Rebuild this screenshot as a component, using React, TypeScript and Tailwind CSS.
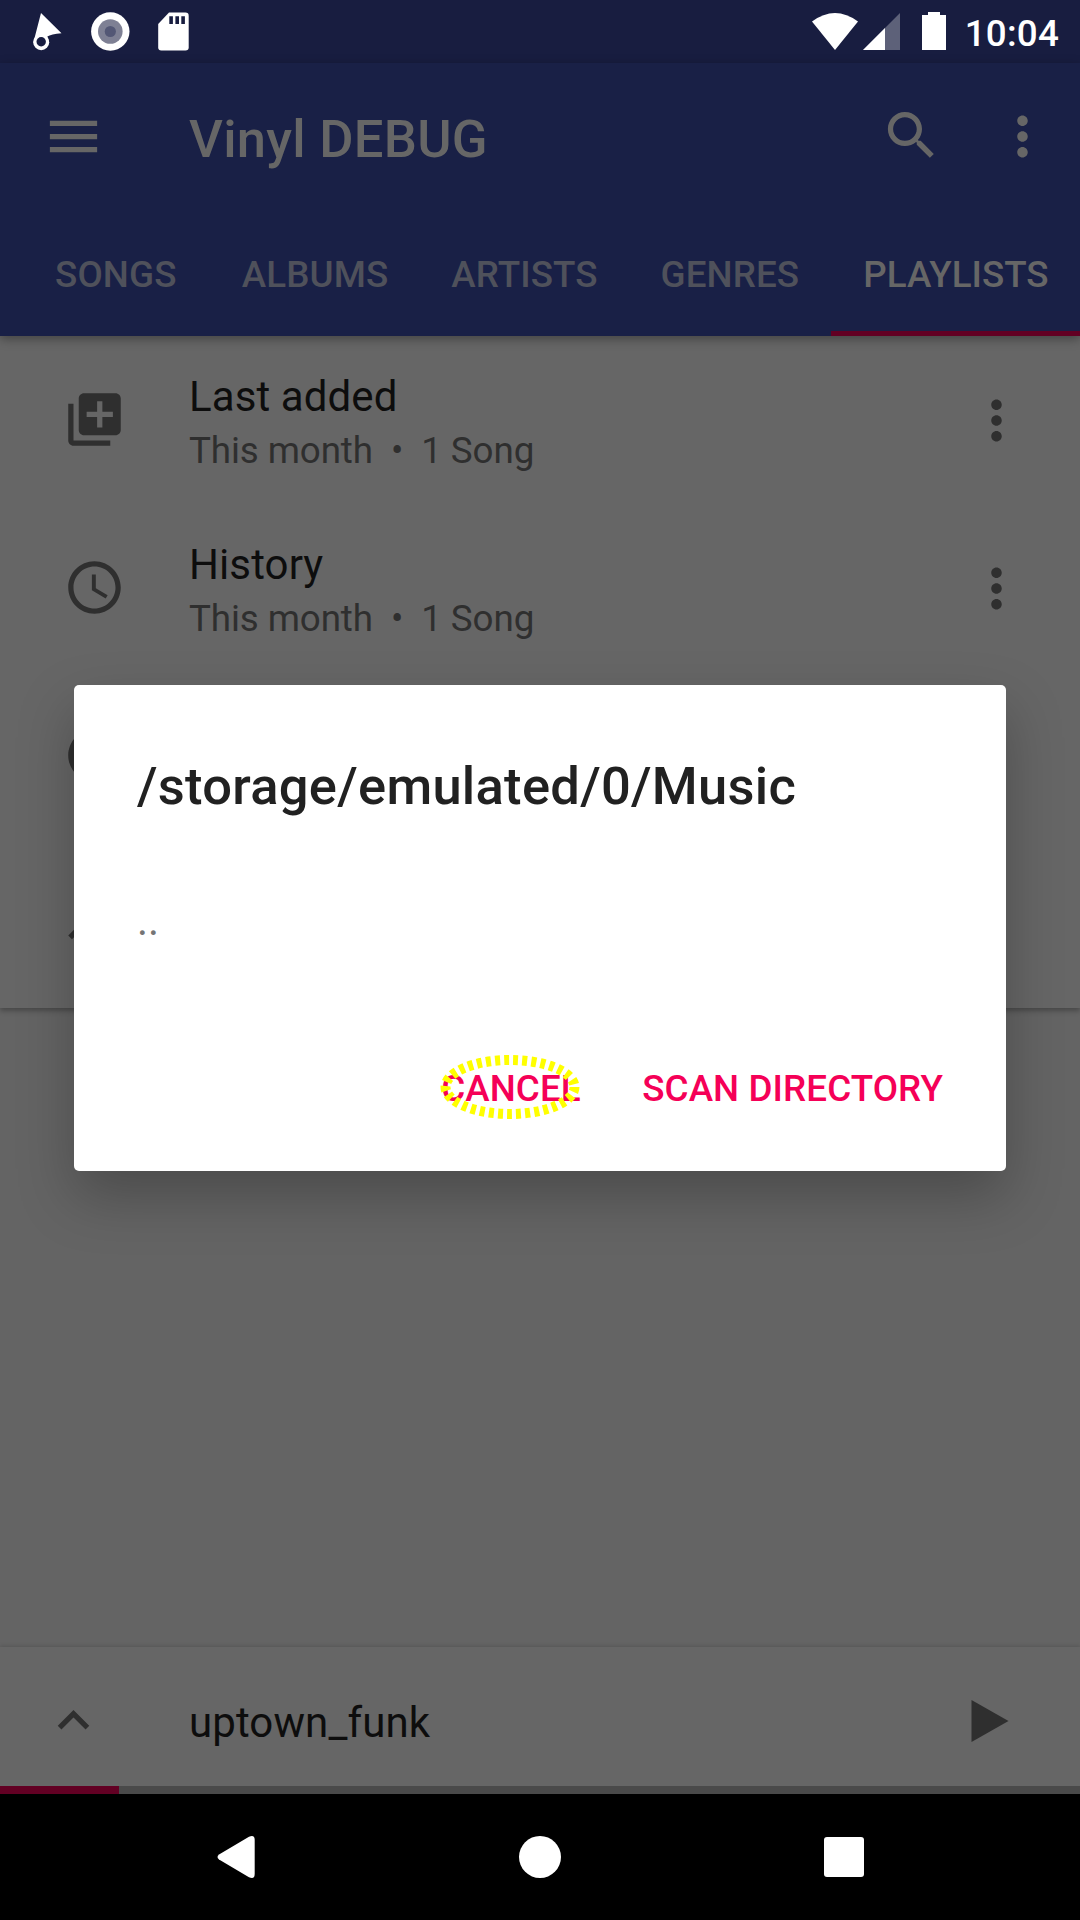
import React from "react";

type IconProps = { d: string; className?: string };

const Icon = ({ d, className = "" }: IconProps) => (
  <svg viewBox="0 0 24 24" className={`h-[63px] w-[63px] shrink-0 ${className}`} fill="currentColor">
    <path d={d} />
  </svg>
);

const icons = {
  menu: "M3 18h18v-2H3v2zm0-5h18v-2H3v2zm0-7v2h18V6H3z",
  search:
    "M15.5 14h-.79l-.28-.27C15.41 12.59 16 11.11 16 9.5 16 5.91 13.09 3 9.5 3S3 5.91 3 9.5 5.91 16 9.5 16c1.61 0 3.09-.59 4.23-1.57l.27.28v.79l5 4.99L20.49 19l-4.99-5zm-6 0C7.01 14 5 11.99 5 9.5S7.01 5 9.5 5 14 7.01 14 9.5 11.99 14 9.5 14z",
  more: "M12 8c1.1 0 2-.9 2-2s-.9-2-2-2-2 .9-2 2 .9 2 2 2zm0 2c-1.1 0-2 .9-2 2s.9 2 2 2 2-.9 2-2-.9-2-2-2zm0 6c-1.1 0-2 .9-2 2s.9 2 2 2 2-.9 2-2-.9-2-2-2z",
  libraryAdd:
    "M4 6H2v14c0 1.1.9 2 2 2h14v-2H4V6zm16-4H8c-1.1 0-2 .9-2 2v12c0 1.1.9 2 2 2h12c1.1 0 2-.9 2-2V4c0-1.1-.9-2-2-2zm-1 9h-4v4h-2v-4H9V9h4V5h2v4h4v2z",
  clock:
    "M11.99 2C6.47 2 2 6.48 2 12s4.47 10 9.99 10C17.52 22 22 17.52 22 12S17.52 2 11.99 2zM12 20c-4.42 0-8-3.58-8-8s3.58-8 8-8 8 3.58 8 8-3.58 8-8 8zm.5-13H11v6l5.25 3.15.75-1.23-4.5-2.67z",
  watchLater: "M12 2C6.5 2 2 6.5 2 12s4.5 10 10 10 10-4.500 10-10S17.5 2 12 2zm4.200 14.200L11 13V7h1.500v5.200l4.500 2.700-.8 1.300z",
  trending: "M16 6l2.290 2.290-4.880 4.880-4-4L2 16.590 3.410 18l6-6 4 4 6.300-6.290L22 12V6z",
  expandLess: "M12 8l-6 6 1.410 1.410L12 10.830l4.590 4.580L18 14z",
};

const playlists = [
  { title: "Last added", icon: icons.libraryAdd, info: "This month  •  1 Song" },
  { title: "History", icon: icons.clock, info: "This month  •  1 Song" },
];

const StatusBar = () => (
  <div className="flex h-[63px] shrink-0 items-center justify-between bg-[#181d40] text-white">
    <svg width="200" height="63" viewBox="0 0 200 63" fill="currentColor">
      <path d="M41 13 61.500 33.200Q51 34 47.300 36.500L49 42H33.500Z" />
      <circle cx="41.200" cy="42.200" r="8" />
      <circle cx="41.200" cy="41.700" r="4.700" fill="#181d40" />
      <circle cx="110.300" cy="31.500" r="19.200" />
      <circle cx="110.300" cy="31.500" r="12.300" fill="#7e8094" />
      <circle cx="110.300" cy="31.500" r="5.600" fill="#535775" />
      <path d="M169 12.500H185.500Q188.700 12.500 188.700 15.700V47.500Q188.700 50.500 185.500 50.500H161.300Q158.200 50.500 158.200 47.500V24Z" />
      <path d="M169.300 16.300h3.600v7.700h-3.600zM175.400 16.300h3.600v7.700h-3.600zM181.300 16.300h3.600v7.700h-3.600z" fill="#181d40" />
    </svg>
    <div className="flex h-full items-center">
      <svg width="154" height="63" viewBox="806 0 154 63" fill="currentColor">
        <path d="M812 21.500Q835 4.500 858 21.500L835 50Z" />
        <path d="M863 50 900 13V50Z" opacity=".3" />
        <path d="M863 50 885 28V50Z" />
        <path d="M922 15h6v-3h12v3h6v35h-24z" />
      </svg>
      <span className="mt-[5px] mr-[21px] ml-[5px] text-[36.75px] leading-none font-medium tracking-[0.2px]">10:04</span>
    </div>
  </div>
);

const Toolbar = () => (
  <div className="flex h-[147px] items-center text-[#666666]">
    <Icon d={icons.menu} className="ml-[42px]" />
    <h1 className="mt-1.5 ml-21 flex-1 text-[52.5px] leading-none font-medium tracking-[0.28px] whitespace-nowrap">
      Vinyl DEBUG
    </h1>
    <Icon d={icons.search} className="mr-12 mb-0.5" />
    <Icon d={icons.more} className="mr-[26px]" />
  </div>
);

const Tabs = () => (
  <nav className="flex h-[126px] justify-end text-[36.75px] font-medium text-[#4f515b]">
    {["SONGS", "ALBUMS", "ARTISTS", "GENRES"].map((t) => (
      <span key={t} className="flex min-w-[189px] items-center justify-center pt-[3px] pr-8 pl-[31px] tracking-[0.1px]">
        {t}
      </span>
    ))}
    <span className="flex items-center border-b-[5px] border-[#620023] pt-2 pr-[31.5px] pl-8 text-[#666666]">
      PLAYLISTS
    </span>
  </nav>
);

const Dialog = () => (
  <div className="absolute top-[685px] left-[74px] flex h-[486px] w-[932px] flex-col rounded-[5px] bg-white pt-[70px] shadow-[0_25px_56px_rgba(0,0,0,0.25)]">
    <h2 className="pl-[63px] text-[52.5px] leading-[62px] font-medium tracking-[0.28px] text-[#212121]">
      /storage/emulated/0/Music
    </h2>
    <p className="mt-[79px] pl-[63px] text-[42px] leading-[49px] text-[#757575]">..</p>
    <div className="mt-[122px] flex justify-end gap-[61.5px] pr-[63px] text-[36.75px] leading-[43px] font-medium tracking-[0.09px] text-[#f50057]">
      <div className="relative">
        <button>CANCEL</button>
        <svg className="absolute -top-[14px] -left-[2px]" width="142" height="68" viewBox="0 0 142 68">
          <ellipse cx="71" cy="34" rx="64.500" ry="27" fill="none" stroke="#ffff00" strokeWidth="10" strokeDasharray="5 4.100" />
        </svg>
      </div>
      <button>SCAN DIRECTORY</button>
    </div>
  </div>
);

const Player = () => (
  <div className="relative shadow-[0_-1px_4px_rgba(0,0,0,0.15)]">
    <div className="flex h-[147px] items-center bg-[#666666] text-[#2f2f2f]">
      <Icon d={icons.expandLess} className="ml-[42px]" />
      <span className="mt-[5px] ml-21 flex-1 text-[42px] leading-none tracking-[0.1px] text-[#0d0d0d]">uptown_funk</span>
      <svg className="mr-[71px]" width="38" height="42" viewBox="0 0 38 42" fill="currentColor">
        <path d="M.5 0 37.500 21 .5 42Z" />
      </svg>
    </div>
    <div className="absolute inset-x-0 bottom-0 flex h-2 bg-[#4a4a4a]">
      <div className="w-[119px] bg-[#620023]" />
    </div>
  </div>
);

const NavigationBar = () => (
  <div className="flex h-[126px] shrink-0 items-center justify-between bg-black pr-[216px] pl-[217px] text-white">
    <svg width="38" height="42" viewBox="0 0 38 42" fill="currentColor">
      <path d="M2 18.500 32 .8Q37.700-1.500 37.700 4V38Q37.700 43.500 32 41.200L2 23.500Q-1 21 2 18.500Z" />
    </svg>
    <div className="h-[42px] w-[42px] rounded-full bg-white" />
    <div className="h-10 w-10 rounded-[3px] bg-white" />
  </div>
);

export default function App() {
  return (
    <div className="relative flex h-[1920px] w-[1080px] flex-col overflow-hidden bg-[#646464] font-[Roboto,sans-serif]">
      <StatusBar />
      <header className="relative z-10 bg-[#192046] shadow-[0_3px_10px_rgba(0,0,0,0.35)]">
        <Toolbar />
        <Tabs />
      </header>
      <main className="flex-1">
        <div className="bg-[#666666] text-[#2f2f2f] shadow-[0_3px_5px_rgba(0,0,0,0.28)]">
          {playlists.map((p) => (
            <div key={p.title} className="flex h-[168px] items-center pl-[63px]">
              <Icon d={p.icon} className="mb-0.5" />
              <div className="ml-[63px] flex h-full flex-1 flex-col pt-9">
                <span className="text-[42px] leading-[49px] tracking-[0.1px] text-[#0d0d0d]">{p.title}</span>
                <span className="mt-2 text-[36.75px] leading-[43px] tracking-[-0.1px] whitespace-pre">{p.info}</span>
              </div>
              <Icon d={icons.more} className="mr-[52px]" />
            </div>
          ))}
          {[icons.watchLater, icons.trending].map((d) => (
            <div key={d} className="flex h-[168px] items-center pl-[63px]">
              <Icon d={d} className="mb-0.5" />
            </div>
          ))}
        </div>
      </main>
      <Player />
      <NavigationBar />
      <Dialog />
    </div>
  );
}
